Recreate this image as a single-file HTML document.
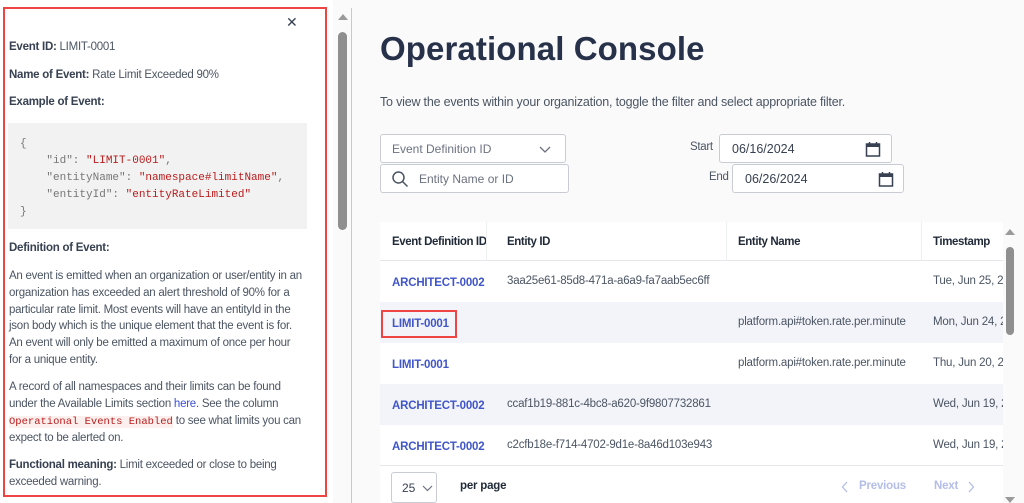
<!DOCTYPE html>
<html><head><meta charset="utf-8"><style>
*{margin:0;padding:0;box-sizing:border-box}
body{width:1024px;height:503px;overflow:hidden;background:#fafafa;font-family:"Liberation Sans",sans-serif;position:relative;color:#4b5563}
.abs{position:absolute;white-space:nowrap}
#left{position:absolute;left:0;top:0;width:333px;height:503px;background:#fff}
#frame{position:absolute;left:3px;top:7px;width:324px;height:490px;border:2px solid #ef4444}
.lt{position:absolute;left:9px;font-size:11.5px;letter-spacing:-0.25px;color:#4b5563;white-space:nowrap}
.lt b{color:#374151}
.code{position:absolute;left:8px;top:123px;width:299px;height:106px;background:#f2f2f2;font-family:"Liberation Mono",monospace;font-size:11px;color:#777;line-height:17px;padding:13px 0 0 12px;white-space:pre}
.code .s{color:#b91c1c}
.para{line-height:16.8px}
.ic{font-family:"Liberation Mono",monospace;color:#b91c1c;background:#fbf0ee;font-size:10.5px;letter-spacing:0}
a{color:#3b4fd8;text-decoration:none}
.field{position:absolute;background:#fff;border:1px solid #c9cdd3;border-radius:3px;font-size:12px;color:#6b7280}
#table{position:absolute;left:380px;top:222px;width:623px;height:281px;background:#fff}
.row{position:absolute;left:0;width:623px;height:41px}
.c{position:absolute;top:0;font-size:11.5px;white-space:nowrap;letter-spacing:-0.2px;color:#4b5563}
.id{color:#4056c8;font-weight:bold}
.h{font-weight:bold;color:#1f2937;letter-spacing:-0.4px}
</style></head><body>
<div id="left">
<div id="frame"></div>
<div class="abs" style="left:286px;top:14px;font-size:14px;color:#374151">✕</div>
<div class="lt" style="top:41px"><b>Event ID:</b> LIMIT-0001</div>
<div class="lt" style="top:69px"><b>Name of Event:</b> Rate Limit Exceeded 90%</div>
<div class="lt" style="top:96px"><b>Example of Event:</b></div>
<div class="code">{
    "id": <span class="s">"LIMIT-0001"</span>,
    "entityName": <span class="s">"namespace#limitName"</span>,
    "entityId": <span class="s">"entityRateLimited"</span>
}</div>
<div class="lt" style="top:242px"><b>Definition of Event:</b></div>
<div class="lt para" style="top:268px">An event is emitted when an organization or user/entity in an<br>organization has exceeded an alert threshold of 90% for a<br>particular rate limit. Most events will have an entityId in the<br>json body which is the unique element that the event is for.<br>An event will only be emitted a maximum of once per hour<br>for a unique entity.</div>
<div class="lt para" style="top:379px">A record of all namespaces and their limits can be found<br>under the Available Limits section <a>here</a>. See the column<br><span class="ic">Operational Events Enabled</span> to see what limits you can<br>expect to be alerted on.</div>
<div class="lt para" style="top:457px"><b>Functional meaning:</b> Limit exceeded or close to being<br>exceeded warning.</div>
</div>
<!-- left scrollbar -->
<div class="abs" style="left:338px;top:14px;width:0;height:0;border-left:5px solid transparent;border-right:5px solid transparent;border-bottom:6px solid #9a9a9a"></div>
<div class="abs" style="left:338px;top:32px;width:9px;height:198px;background:#8f8f8f;border-radius:5px"></div>
<div class="abs" style="left:351px;top:8px;width:1px;height:495px;background:#c9c9c9"></div>

<div class="abs" style="left:380px;top:30px;font-size:33px;font-weight:bold;color:#27324a;letter-spacing:0.1px">Operational Console</div>
<div class="abs" style="left:380px;top:95px;font-size:12.5px;color:#4b5563;letter-spacing:-0.2px">To view the events within your organization, toggle the filter and select appropriate filter.</div>

<div class="field" style="left:380px;top:134px;width:186px;height:29px"><span class="abs" style="left:11px;top:7px">Event Definition ID</span>
<svg class="abs" style="left:158px;top:9px" width="12" height="10"><path d="M1 3l5 5 5-5" fill="none" stroke="#6b7280" stroke-width="1.3"/></svg></div>
<div class="field" style="left:380px;top:164px;width:189px;height:29px">
<svg class="abs" style="left:10px;top:5px" width="18" height="18"><circle cx="7.5" cy="7.5" r="5.5" fill="none" stroke="#4b5563" stroke-width="1.5"/><path d="M11.5 11.5l5 5" stroke="#4b5563" stroke-width="1.5"/></svg>
<span class="abs" style="left:38px;top:7px">Entity Name or ID</span></div>

<div class="abs" style="left:690px;top:141px;font-size:11.5px;color:#4b5563;letter-spacing:-0.3px">Start</div>
<div class="field" style="left:719px;top:134px;width:173px;height:29px"><span class="abs" style="left:12px;top:7px;color:#374151;font-size:12.5px">06/16/2024</span>
<svg class="abs" style="left:145px;top:6px" width="16" height="17"><rect x="1.5" y="3" width="13" height="12" fill="none" stroke="#374151" stroke-width="1.5"/><rect x="1.5" y="3" width="13" height="3" fill="#374151"/><path d="M4.5 1v3M11.5 1v3" stroke="#374151" stroke-width="1.5"/></svg></div>
<div class="abs" style="left:709px;top:171px;font-size:11.5px;color:#4b5563;letter-spacing:-0.3px">End</div>
<div class="field" style="left:732px;top:164px;width:172px;height:29px"><span class="abs" style="left:12px;top:7px;color:#374151;font-size:12.5px">06/26/2024</span>
<svg class="abs" style="left:145px;top:6px" width="16" height="17"><rect x="1.5" y="3" width="13" height="12" fill="none" stroke="#374151" stroke-width="1.5"/><rect x="1.5" y="3" width="13" height="3" fill="#374151"/><path d="M4.5 1v3M11.5 1v3" stroke="#374151" stroke-width="1.5"/></svg></div>

<div id="table">
<div class="row" style="top:0;height:39px;border-bottom:1px solid #e5e7eb">
<div class="c h" style="left:12px;top:14px">Event Definition ID</div>
<div class="c h" style="left:127px;top:14px">Entity ID</div>
<div class="c h" style="left:358px;top:14px">Entity Name</div>
<div class="c h" style="left:553px;top:14px">Timestamp</div>
<div class="abs" style="left:106px;top:0;width:1px;height:39px;background:#eceef2"></div>
<div class="abs" style="left:346px;top:0;width:1px;height:39px;background:#eceef2"></div>
<div class="abs" style="left:541px;top:0;width:1px;height:39px;background:#eceef2"></div>
</div>
<div class="row" style="top:39px">
<div class="c id" style="left:12px;top:16px">ARCHITECT-0002</div>
<div class="c" style="left:127px;top:14px">3aa25e61-85d8-471a-a6a9-fa7aab5ec6ff</div>
<div class="c" style="left:553px;top:14px">Tue, Jun 25, 20</div></div>
<div class="row" style="top:80px;background:#f3f4f9">
<div class="abs" style="left:1px;top:8px;width:76px;height:28px;border:2px solid #ef4444"></div>
<div class="c id" style="left:12px;top:16px">LIMIT-0001</div>
<div class="c" style="left:358px;top:14px">platform.api#token.rate.per.minute</div>
<div class="c" style="left:553px;top:14px">Mon, Jun 24, 2</div></div>
<div class="row" style="top:121px">
<div class="c id" style="left:12px;top:16px">LIMIT-0001</div>
<div class="c" style="left:358px;top:14px">platform.api#token.rate.per.minute</div>
<div class="c" style="left:553px;top:14px">Thu, Jun 20, 20</div></div>
<div class="row" style="top:162px;background:#f3f4f9">
<div class="c id" style="left:12px;top:16px">ARCHITECT-0002</div>
<div class="c" style="left:127px;top:14px">ccaf1b19-881c-4bc8-a620-9f9807732861</div>
<div class="c" style="left:553px;top:14px">Wed, Jun 19, 2</div></div>
<div class="row" style="top:203px;border-bottom:1px solid #e5e7eb">
<div class="c id" style="left:12px;top:16px">ARCHITECT-0002</div>
<div class="c" style="left:127px;top:14px">c2cfb18e-f714-4702-9d1e-8a46d103e943</div>
<div class="c" style="left:553px;top:14px">Wed, Jun 19, 2</div></div>
<div class="abs" style="left:11px;top:250px;width:46px;height:31px;border:1px solid #c9cdd3;border-radius:3px;background:#fff">
<span class="abs" style="left:10px;top:8px;font-size:12px;color:#374151">25</span>
<svg class="abs" style="left:30px;top:11px" width="11" height="8"><path d="M1 2l4.5 4.5 4.5-4.5" fill="none" stroke="#6b7280" stroke-width="1.2"/></svg></div>
<div class="c" style="left:80px;top:258px;font-weight:bold;color:#1f2937">per page</div>
<svg class="abs" style="left:461px;top:259px" width="8" height="12"><path d="M6 1L1.5 6 6 11" fill="none" stroke="#b4bde8" stroke-width="1.3"/></svg>
<div class="c" style="left:479px;top:258px;color:#b4bde8;font-weight:bold">Previous</div>
<div class="c" style="left:554px;top:258px;color:#b4bde8;font-weight:bold">Next</div>
<svg class="abs" style="left:587px;top:259px" width="8" height="12"><path d="M2 1l4.5 5L2 11" fill="none" stroke="#b4bde8" stroke-width="1.3"/></svg>
</div>
<!-- table scrollbar -->
<div class="abs" style="left:1003px;top:222px;width:14px;height:281px;background:#fafafa"></div>
<div class="abs" style="left:1005px;top:229px;width:0;height:0;border-left:5px solid transparent;border-right:5px solid transparent;border-bottom:6px solid #9a9a9a"></div>
<div class="abs" style="left:1006px;top:247px;width:8px;height:88px;background:#8f8f8f;border-radius:4px"></div>
<div class="abs" style="left:1005px;top:497px;width:0;height:0;border-left:5px solid transparent;border-right:5px solid transparent;border-top:6px solid #9a9a9a"></div>
</body></html>
